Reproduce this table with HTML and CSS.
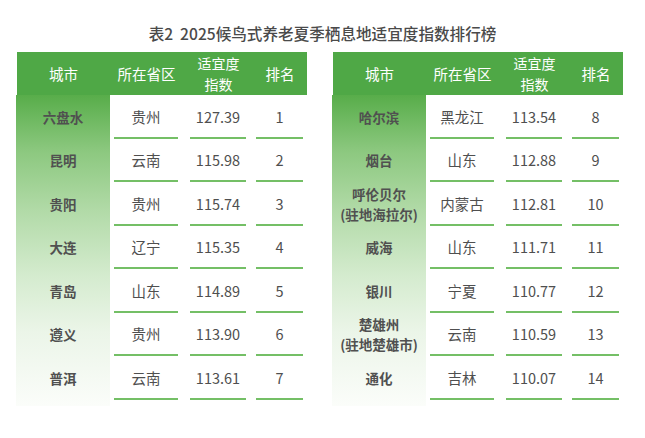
FILE: index.html
```html
<!DOCTYPE html>
<html lang="zh-CN">
<head>
<meta charset="utf-8">
<link rel="stylesheet" href="styles.css">
</head>
<body>
<div class="page">
  <h1 class="title">表2&nbsp; 2025候鸟式养老夏季栖息地适宜度指数排行榜</h1>
  <div class="tables">
    <div class="table">
      <div class="head">
        <div class="h h-city">城市</div>
        <div class="h">所在省区</div>
        <div class="h h-two"><span class="ln">适宜度</span><span class="ln">指数</span></div>
        <div class="h">排名</div>
      </div>
      <div class="body">
        <div class="cities">
          <div class="city">六盘水</div>
          <div class="city">昆明</div>
          <div class="city">贵阳</div>
          <div class="city">大连</div>
          <div class="city">青岛</div>
          <div class="city">遵义</div>
          <div class="city">普洱</div>
        </div>
        <div class="data">
          <div class="c c2">贵州</div><div class="c c3">127.39</div><div class="c c4">1</div>
          <div class="c c2">云南</div><div class="c c3">115.98</div><div class="c c4">2</div>
          <div class="c c2">贵州</div><div class="c c3">115.74</div><div class="c c4">3</div>
          <div class="c c2">辽宁</div><div class="c c3">115.35</div><div class="c c4">4</div>
          <div class="c c2">山东</div><div class="c c3">114.89</div><div class="c c4">5</div>
          <div class="c c2">贵州</div><div class="c c3">113.90</div><div class="c c4">6</div>
          <div class="c c2">云南</div><div class="c c3">113.61</div><div class="c c4">7</div>
        </div>
      </div>
    </div>
    <div class="table">
      <div class="head">
        <div class="h h-city">城市</div>
        <div class="h">所在省区</div>
        <div class="h h-two"><span class="ln">适宜度</span><span class="ln">指数</span></div>
        <div class="h">排名</div>
      </div>
      <div class="body">
        <div class="cities">
          <div class="city">哈尔滨</div>
          <div class="city">烟台</div>
          <div class="city two"><span class="ln">呼伦贝尔</span><span class="ln">(驻地海拉尔)</span></div>
          <div class="city">威海</div>
          <div class="city">银川</div>
          <div class="city two"><span class="ln">楚雄州</span><span class="ln">(驻地楚雄市)</span></div>
          <div class="city">通化</div>
        </div>
        <div class="data">
          <div class="c c2">黑龙江</div><div class="c c3">113.54</div><div class="c c4">8</div>
          <div class="c c2">山东</div><div class="c c3">112.88</div><div class="c c4">9</div>
          <div class="c c2">内蒙古</div><div class="c c3">112.81</div><div class="c c4">10</div>
          <div class="c c2">山东</div><div class="c c3">111.71</div><div class="c c4">11</div>
          <div class="c c2">宁夏</div><div class="c c3">110.77</div><div class="c c4">12</div>
          <div class="c c2">云南</div><div class="c c3">110.59</div><div class="c c4">13</div>
          <div class="c c2">吉林</div><div class="c c3">110.07</div><div class="c c4">14</div>
        </div>
      </div>
    </div>
  </div>
</div>
</body>
</html>
```
FILE: styles.css
```css
* { box-sizing: border-box; }
html, body {
  margin: 0;
  padding: 0;
  background: #ffffff;
}
body {
  font-family: "Noto Sans CJK SC", "Noto Sans", sans-serif;
  color: #4f4f4f;
}
.page {
  width: 645px;
  height: 438px;
  padding-top: 22px;
}
.title {
  margin: 0;
  text-align: center;
  font-size: 15.6px;
  line-height: 22px;
  font-weight: 500;
  color: #4a4a4a;
  letter-spacing: 0;
}
.tables {
  display: flex;
  gap: 25px;
  margin-top: 8px;
  padding-left: 16px;
}
.table {
  width: 291px;
}
.head {
  display: grid;
  grid-template-columns: 94px 76px 66px 55px;
  height: 43px;
  margin-left: 1px;
  background: #4fa846;
  color: #ffffff;
  font-size: 14.5px;
}
.h {
  display: flex;
  flex-direction: column;
  align-items: center;
  justify-content: center;
  text-align: center;
  line-height: 18px;
  padding-right: 4px;
}
.ln {
  display: block;
}
.h-two .ln {
  font-size: 14px;
  line-height: 20.5px;
}
.head .h:nth-child(2) { padding-left: 4px; padding-right: 8px; margin-left: -1px; }
.head .h:nth-child(3) { padding-left: 4px; padding-right: 6px; margin-left: -1px; }
.head .h:nth-child(4) { padding-left: 4px; padding-right: 4px; margin-left: -1px; }
.h-city { padding-right: 0; margin-left: -1px; }
.body {
  display: flex;
}
.cities {
  width: 94px;
  padding-bottom: 6px;
  background: linear-gradient(180deg, #58ad4a 0%, #8cc87f 18%, #b3dba9 38%, #d4ebce 58%, #ebf5e8 76%, #fbfdfa 100%);
}
.city {
  height: 43.5px;
  display: flex;
  flex-direction: column;
  align-items: center;
  justify-content: center;
  text-align: center;
  font-size: 13.5px;
  font-weight: 700;
  line-height: 20px;
  color: #505050;
}
.data {
  display: grid;
  grid-template-columns: 76px 66px 55px;
  grid-auto-rows: 43.5px;
}
.c {
  display: flex;
  align-items: center;
  justify-content: center;
  border-bottom: 2px solid #74bf66;
  font-size: 14.5px;
  color: #4f4f4f;
  margin-left: 4px;
  padding-top: 1px;
}
.c2 { margin-right: 8px; }
.c3 { margin-right: 6px; }
.c4 { margin-right: 4px; }
```
